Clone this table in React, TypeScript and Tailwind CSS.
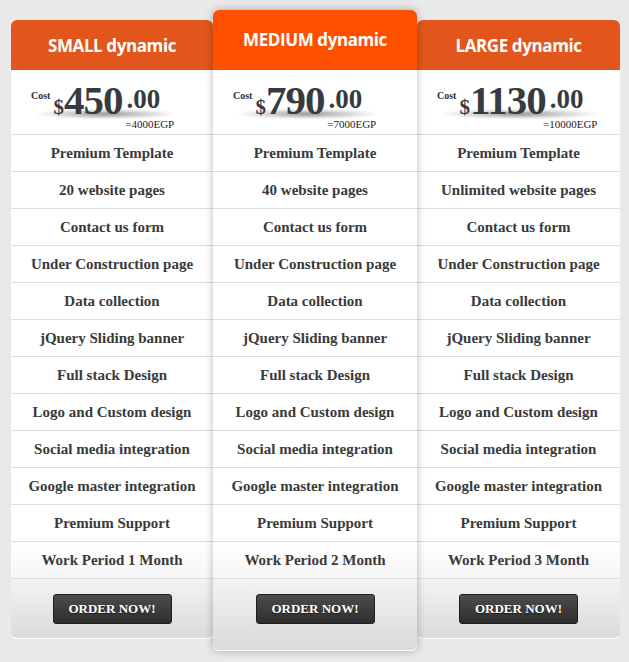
import React from 'react';

type Plan = {
  name: string;
  price: string;
  egp: string;
  pages: string;
  period: string;
  width: string;
  featured?: boolean;
};

const plans: Plan[] = [
  { name: 'SMALL dynamic', price: '450', egp: '=4000EGP', pages: '20 website pages', period: 'Work Period 1 Month', width: 'w-[202px]' },
  { name: 'MEDIUM dynamic', price: '790', egp: '=7000EGP', pages: '40 website pages', period: 'Work Period 2 Month', width: 'w-[204px]', featured: true },
  { name: 'LARGE dynamic', price: '1130', egp: '=10000EGP', pages: 'Unlimited website pages', period: 'Work Period 3 Month', width: 'w-[203px]' },
];

const serif = "font-['Liberation_Serif','Times_New_Roman',serif]";

function Price({ plan }: { plan: Plan }) {
  return (
    <div className="h-[65px] border-b border-[#dedede] pl-[20px] pt-[11px]">
      <div className="relative inline-flex flex-col">
        {/* shadow under the figure */}
        <div className="absolute left-[4px] right-[-16px] top-[25px] h-[10px] rounded-[50%] bg-[radial-gradient(ellipse_at_center,rgba(0,0,0,0.45)_0%,rgba(0,0,0,0.15)_45%,rgba(0,0,0,0)_72%)] blur-[1px]" />
        <div className={`relative flex items-end text-[#363b40] ${serif}`}>
          <span className="self-start mt-[7px] mr-[3px] text-[10px] font-bold leading-none text-[#2f2f2f]">Cost</span>
          <span className="text-[21px] font-bold leading-none mb-[-2px]">$</span>
          <span className="text-[41px] font-bold leading-[32px] tracking-[-1px]">{plan.price}</span>
          <span className="text-[27px] font-bold leading-none mb-[3px] ml-[4px]">.00</span>
        </div>
        <div className={`relative self-end mr-[-14px] mt-[3px] text-[11px] leading-none text-[#222] ${serif}`}>{plan.egp}</div>
      </div>
    </div>
  );
}

function Column({ plan }: { plan: Plan }) {
  const features = [
    'Premium Template',
    plan.pages,
    'Contact us form',
    'Under Construction page',
    'Data collection',
    'jQuery Sliding banner',
    'Full stack Design',
    'Logo and Custom design',
    'Social media integration',
    'Google master integration',
    'Premium Support',
    plan.period,
  ];
  return (
    <div
      className={
        plan.featured
          ? `relative z-10 ${plan.width} rounded-[6px] bg-white shadow-[0_0_9px_rgba(0,0,0,0.28)]`
          : `${plan.width} mt-[10px] rounded-[6px] bg-white`
      }
    >
      <div
        className={
          plan.featured
            ? "flex h-[60px] items-center justify-center rounded-t-[6px] bg-[#fe5000] font-['Open_Sans',sans-serif] text-[17px] font-bold tracking-[-0.4px] text-white"
            : "flex h-[50px] items-center justify-center rounded-t-[6px] bg-[#e2561b] pt-[2px] font-['Open_Sans',sans-serif] text-[17px] font-bold tracking-[-0.4px] text-white"
        }
      >
        {plan.name}
      </div>
      <Price plan={plan} />
      {features.map((f, i) => (
        <div
          key={i}
          className={`flex h-[37px] items-center justify-center border-b border-[#dedede] text-[15px] font-bold text-[#3a3a3a] ${serif} ${
            i === features.length - 1 ? 'bg-gradient-to-b from-white to-[#f6f6f6]' : ''
          }`}
        >
          {f}
        </div>
      ))}
      <div
        className={
          plan.featured
            ? 'flex h-[72px] justify-center rounded-b-[6px] border-b border-white bg-gradient-to-b from-[#f2f3f3] to-[#d9dada] pt-[15px]'
            : 'flex h-[60px] justify-center rounded-b-[6px] border-b border-white bg-gradient-to-b from-[#f2f3f3] to-[#dadbdb] pt-[15px]'
        }
      >
        <button
          className={`h-[30px] w-[119px] rounded-[3px] border border-[#1e1e1e] bg-gradient-to-b from-[#4d4d4d] to-[#2e2e2e] text-[13px] font-bold text-white [text-shadow:0_1px_1px_rgba(0,0,0,0.6)] ${serif}`}
        >
          ORDER NOW!
        </button>
      </div>
    </div>
  );
}

export default function App() {
  return (
    <div className="min-h-[662px] w-[629px] bg-[#e9e9e9] pl-[11px] pt-[10px]">
      <div className="flex items-start">
        <Column plan={plans[0]} />
        <Column plan={plans[1]} />
        <Column plan={plans[2]} />
      </div>
    </div>
  );
}
